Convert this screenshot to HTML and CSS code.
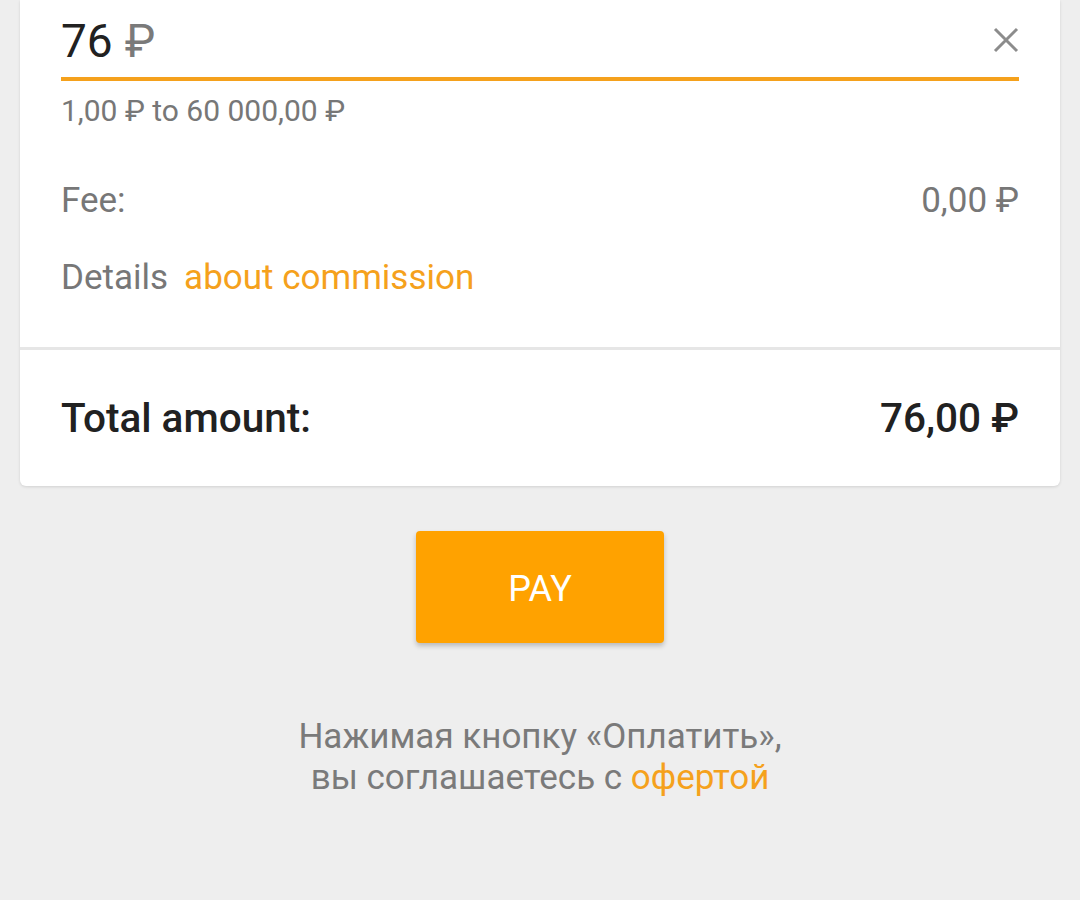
FILE: index.html
```html
<!DOCTYPE html>
<html lang="ru">
<head>
<meta charset="utf-8">
<link rel="stylesheet" href="styles.css">
</head>
<body>
<div class="card">
  <div class="form">
    <div class="amount-row">
      <span class="amount">76</span><span class="currency">₽</span>
      <span class="spacer"></span>
      <svg class="clear" width="26" height="26" viewBox="0 0 26 26"><path d="M2 2 L24 24 M24 2 L2 24" stroke="#8c8c8c" stroke-width="3" fill="none"/></svg>
    </div>
    <div class="helper">1,00 ₽ to 60 000,00 ₽</div>
    <div class="row fee">
      <span>Fee:</span><span>0,00 ₽</span>
    </div>
    <div class="details">
      <span>Details</span><a class="link">about commission</a>
    </div>
  </div>
  <div class="divider"></div>
  <div class="total">
    <span>Total amount:</span><span>76,00 ₽</span>
  </div>
</div>
<div class="actions">
  <button class="pay">PAY</button>
</div>
<p class="note">Нажимая кнопку «Оплатить»,<br>вы соглашаетесь с <a class="link">офертой</a></p>
</body>
</html>
```
FILE: styles.css
```css
* { box-sizing: border-box; }
html, body { margin: 0; padding: 0; }
body {
  background: #eeeeee;
  font-family: Roboto, "Noto Sans", sans-serif;
  width: 1080px;
  height: 900px;
  overflow: hidden;
}
.card {
  margin: 0 20px;
  background: #fff;
  border-radius: 0 0 6px 6px;
  box-shadow: 0 1px 3px rgba(0,0,0,0.12);
}
.form { padding: 0 41px 49px; }
.amount-row {
  height: 81px;
  padding-top: 4px;
  display: flex;
  align-items: center;
  border-bottom: 4px solid #f5a11c;
}
.amount { font-size: 46px; color: #212121; }
.currency { font-size: 46px; color: #7a7a7a; margin-left: 12px; }
.spacer { flex: 1; }
.clear { display: block; margin-top: -2px; }
.helper {
  margin-top: 10px;
  font-size: 30px;
  line-height: 40px;
  color: #777777;
}
.row {
  display: flex;
  justify-content: space-between;
  font-size: 35px;
  line-height: 40px;
  color: #777777;
}
.fee { margin-top: 50px; }
.details {
  margin-top: 37px;
  font-size: 35px;
  line-height: 40px;
  color: #777777;
  display: flex;
  gap: 16px;
}
.link { color: #f5a11c; text-decoration: none; }
.divider { height: 3px; background: #e6e6e6; }
.total {
  height: 136px;
  padding: 0 41px;
  display: flex;
  align-items: center;
  justify-content: space-between;
  font-size: 40.5px;
  font-weight: 500;
  color: #212121;
}
.actions {
  display: flex;
  justify-content: center;
  margin-top: 45px;
}
.pay {
  width: 248px;
  height: 112px;
  padding: 4px 0 0;
  border: none;
  border-radius: 4px;
  background: #ffa200;
  color: #fff;
  font-family: Roboto, sans-serif;
  font-size: 36px;
  font-weight: 400;
  box-shadow: 0 3px 5px rgba(0,0,0,0.22);
}
.note {
  margin: 73px 0 0;
  text-align: center;
  font-size: 35px;
  line-height: 41px;
  color: #7a7a7a;
}
```
